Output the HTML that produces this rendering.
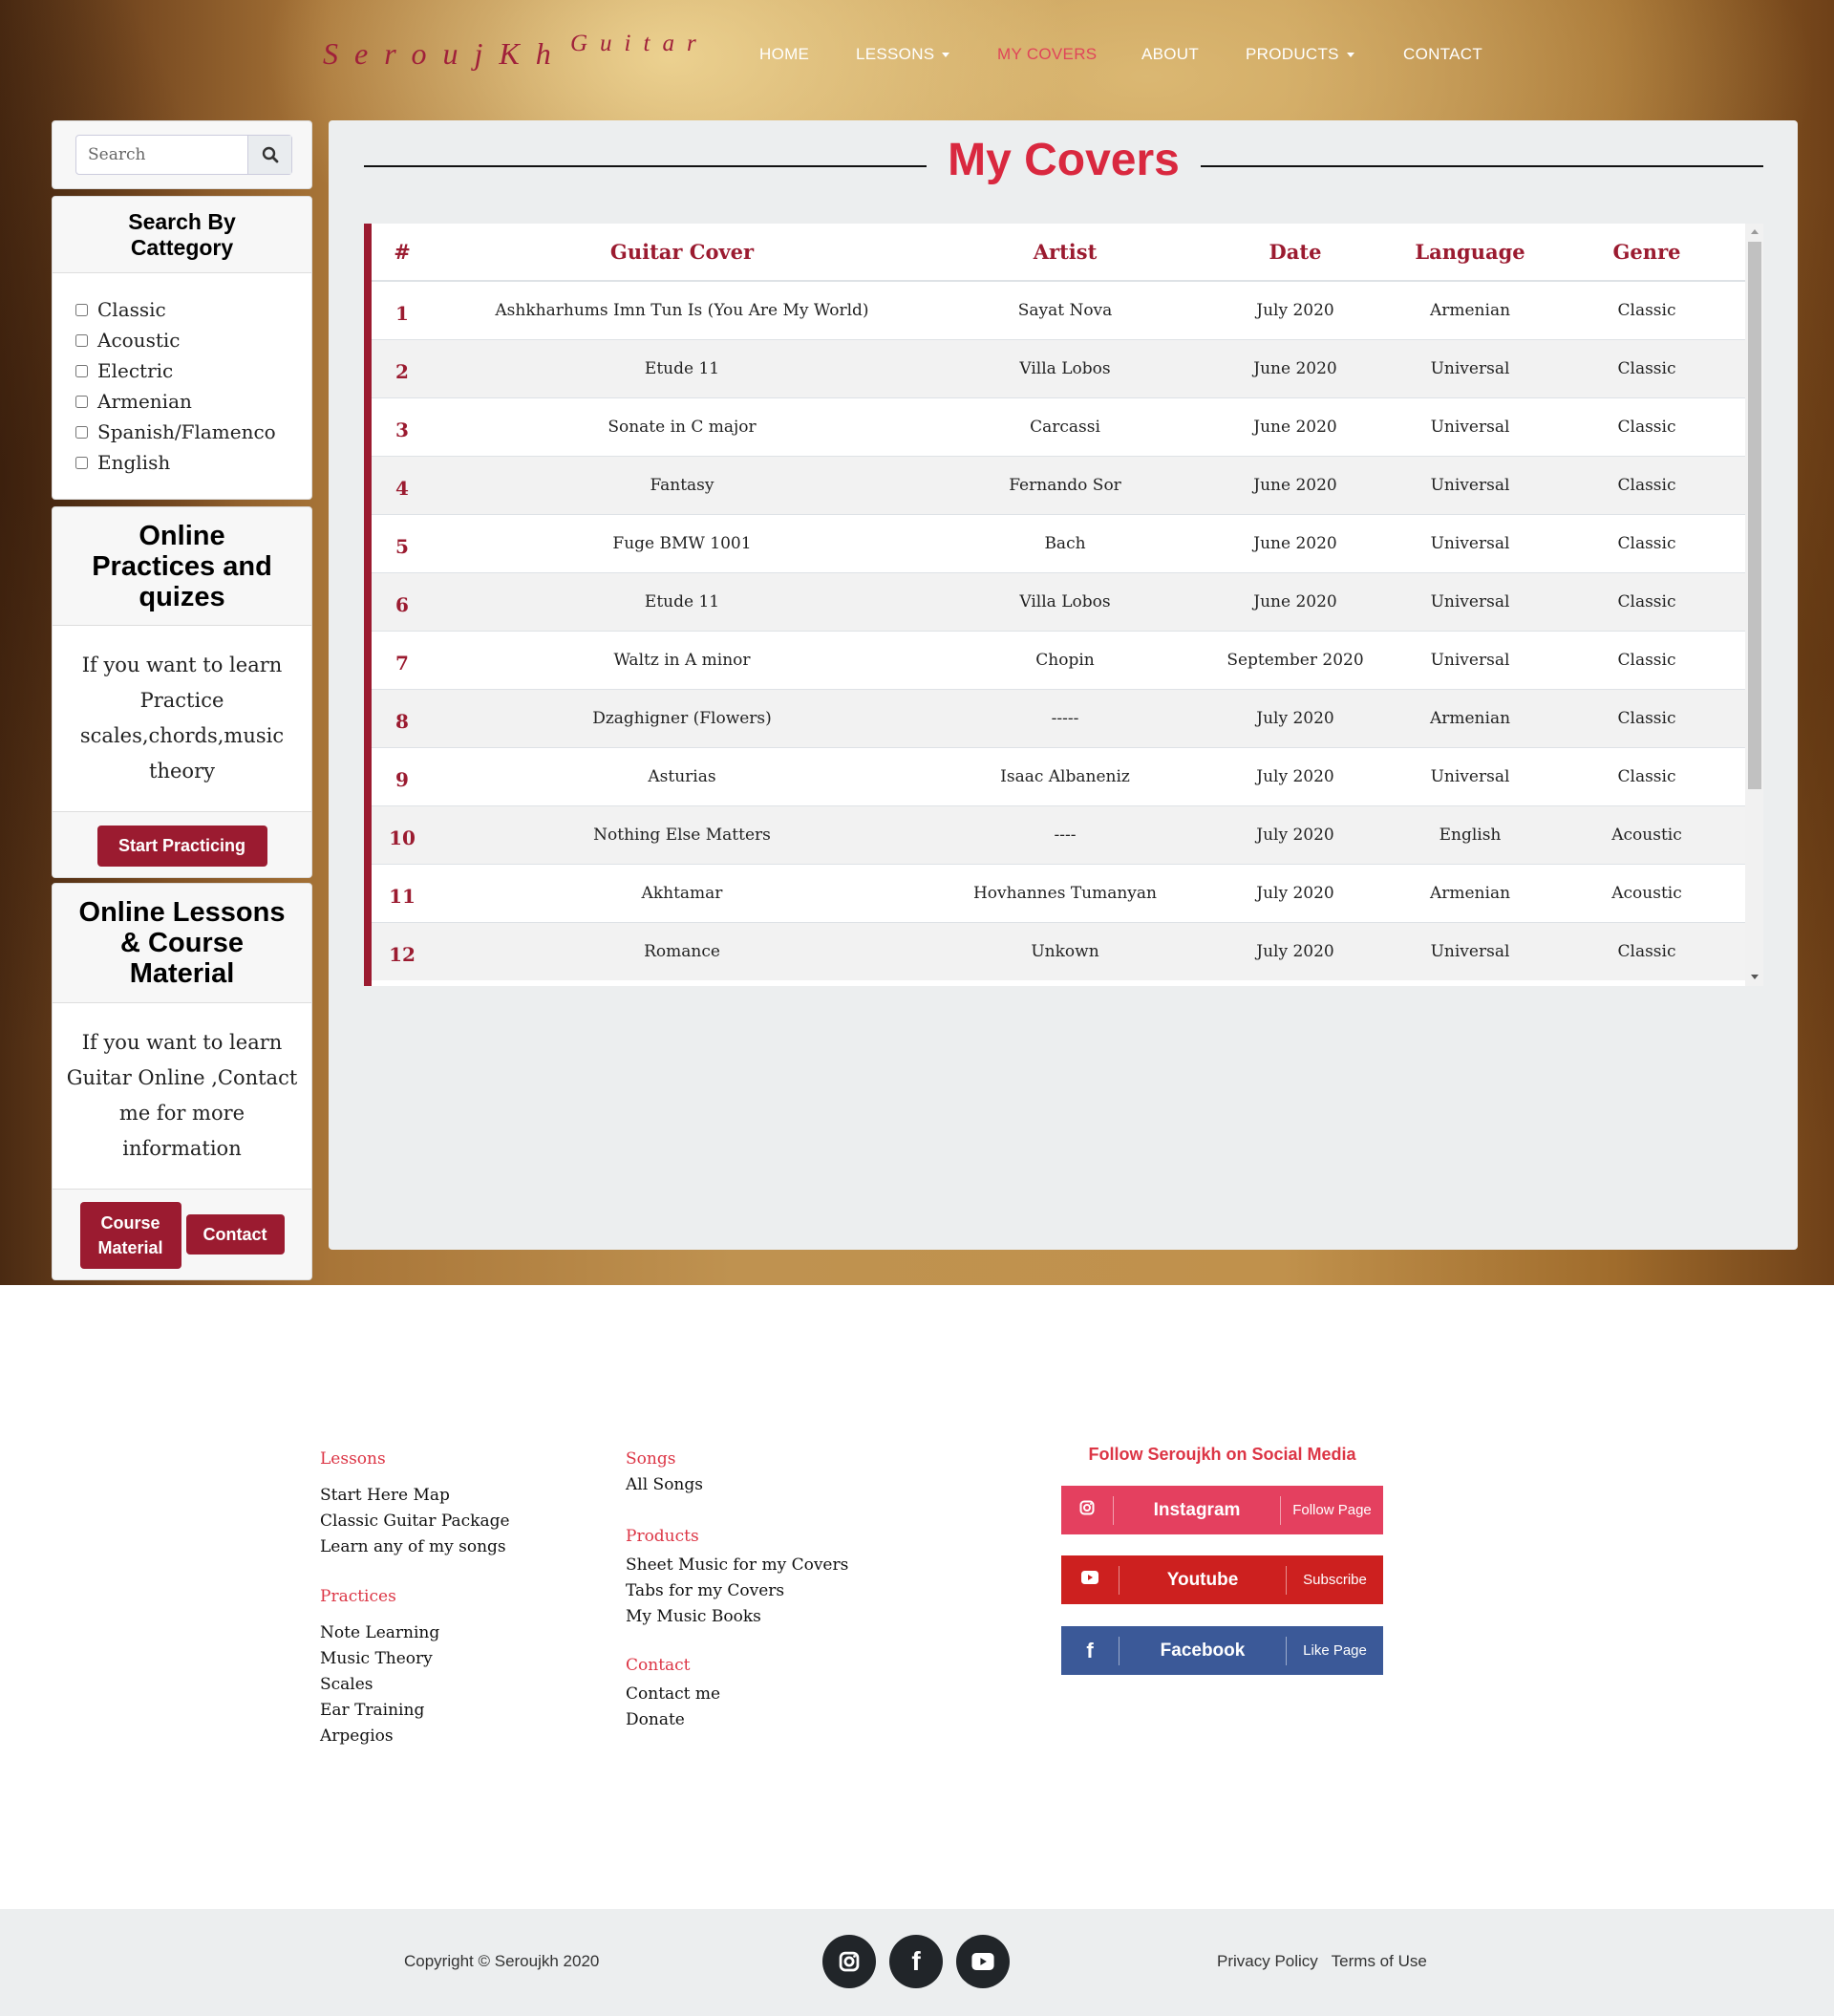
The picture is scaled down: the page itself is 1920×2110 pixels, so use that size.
<!DOCTYPE html>
<html><head><meta charset="utf-8">
<style>
*{box-sizing:border-box;margin:0;padding:0}
body{width:1920px;height:2110px;position:relative;background:#fff;font-family:"Liberation Sans",sans-serif;overflow:hidden}
.hero{position:absolute;left:0;top:0;width:1920px;height:1345px;
background:
radial-gradient(ellipse 420px 260px at 700px 60px,rgba(240,215,150,.9),rgba(240,215,150,0) 100%),
radial-gradient(ellipse 700px 300px at 1200px 80px,rgba(230,200,130,.7),rgba(230,200,130,0) 100%),
radial-gradient(ellipse 300px 500px at 1900px 700px,rgba(90,50,15,.6),rgba(0,0,0,0) 100%),
radial-gradient(ellipse 250px 600px at 0px 500px,rgba(50,25,10,.6),rgba(0,0,0,0) 100%),
linear-gradient(90deg,#4a2a12 0%,#7a4c22 8%,#a87538 18%,#bf9250 40%,#c0914c 70%,#a06c2c 88%,#6e4018 100%);}
.abs{position:absolute}
.logo1{left:338px;top:38px;font-family:"Liberation Serif",serif;font-style:italic;font-size:32px;color:#a0203a;letter-spacing:17px}
.logo2{left:597px;top:32px;font-family:"Liberation Serif",serif;font-style:italic;font-size:25px;color:#a0203a;letter-spacing:13px}
.nav{top:47px;font-size:17px;color:#fff;letter-spacing:.3px}
.caret{display:inline-block;width:0;height:0;border-left:4px solid transparent;border-right:4px solid transparent;border-top:5px solid #fff;vertical-align:middle;margin-left:8px}
.card{position:absolute;left:54px;width:273px;background:#f7f7f7;border-radius:4px;border:1px solid #ddd;overflow:hidden}
.ch{background:#f7f7f7;border-bottom:1px solid #ddd;text-align:center;font-weight:bold;color:#000;display:flex;align-items:center;justify-content:center}
.cb{background:#fff;text-align:center;font-family:"DejaVu Serif",serif;color:#222}
.cf{background:#f7f7f7;border-top:1px solid #ddd;display:flex;align-items:center;justify-content:center;gap:5px}
.btn{background:#9b1b30;color:#fff;font-weight:bold;font-size:18px;border-radius:4px;text-align:center;display:flex;align-items:center;justify-content:center;line-height:26px}
.main{left:344px;top:126px;width:1538px;height:1182px;background:#eceeef;border-radius:4px}
table{border-collapse:collapse;font-family:"DejaVu Serif",serif;table-layout:fixed}
td,th{text-align:center;vertical-align:middle;border-top:1px solid #dee2e6;height:61px;font-size:17px;color:#222}
th{color:#9b1b30;font-size:21px;font-weight:bold;height:60px;border-top:none;border-bottom:2px solid #dee2e6;background:#fff}
td.n{color:#9b1b30;font-weight:bold;font-size:20px;padding-top:6px}
tr:nth-child(odd) td{background:#f2f2f2}
tr:nth-child(even) td{background:#fff}
.fh{color:#dc3545;font-family:"DejaVu Serif",serif;font-size:17px}
.fi{color:#111;font-family:"DejaVu Serif",serif;font-size:17px}
.sb{position:absolute;left:1111px;width:337px;height:51px;color:#fff;display:flex;align-items:center}
.circ{position:absolute;top:2025px;width:56px;height:56px;border-radius:50%;background:#212529;display:flex;align-items:center;justify-content:center}
</style></head><body>
<div class="hero"></div>
<div class="abs logo1">SeroujKh</div>
<div class="abs logo2">Guitar</div>
<div class="abs nav" style="left:795px">HOME</div>
<div class="abs nav" style="left:896px">LESSONS<span class="caret"></span></div>
<div class="abs nav" style="left:1044px;color:#e0455a">MY COVERS</div>
<div class="abs nav" style="left:1195px">ABOUT</div>
<div class="abs nav" style="left:1304px">PRODUCTS<span class="caret"></span></div>
<div class="abs nav" style="left:1469px">CONTACT</div>

<!-- sidebar -->
<div class="card" style="top:126px;height:72px">
 <div style="position:absolute;left:24px;top:14px;width:227px;height:42px;border:1px solid #ccd;border-radius:4px;background:#fff;display:flex">
  <div style="flex:1;padding:10px 12px;font-family:'DejaVu Serif',serif;font-size:17px;color:#666">Search</div>
  <div style="width:46px;background:#e9ecef;border-left:1px solid #ccd;display:flex;align-items:center;justify-content:center">
   <svg width="18" height="18" viewBox="0 0 18 18"><circle cx="7.5" cy="7.5" r="5.5" fill="none" stroke="#333" stroke-width="2.4"/><path d="M11.5 11.5L16 16" stroke="#333" stroke-width="2.8" stroke-linecap="round"/></svg>
  </div>
 </div>
</div>
<div class="card" style="top:205px;height:318px;background:#fff">
 <div class="ch" style="height:80px;font-size:23px;line-height:27px">Search By<br>Cattegory</div>
 <div class="cb" style="text-align:left;padding:22px 0 0 24px;font-size:20px;line-height:32px">
  <div><input type="checkbox" style="width:13px;height:13px;margin-right:10px">Classic</div>
  <div><input type="checkbox" style="width:13px;height:13px;margin-right:10px">Acoustic</div>
  <div><input type="checkbox" style="width:13px;height:13px;margin-right:10px">Electric</div>
  <div><input type="checkbox" style="width:13px;height:13px;margin-right:10px">Armenian</div>
  <div><input type="checkbox" style="width:13px;height:13px;margin-right:10px">Spanish/Flamenco</div>
  <div><input type="checkbox" style="width:13px;height:13px;margin-right:10px">English</div>
 </div>
</div>
<div class="card" style="top:530px;height:389px">
 <div class="ch" style="height:124px;font-size:29px;line-height:32px">Online<br>Practices and<br>quizes</div>
 <div class="cb" style="height:194px;padding-top:23px;font-size:21px;line-height:37px">If you want to learn<br>Practice<br>scales,chords,music<br>theory</div>
 <div class="cf" style="height:71px"><div class="btn" style="width:178px;height:43px">Start Practicing</div></div>
</div>
<div class="card" style="top:924px;height:416px">
 <div class="ch" style="height:125px;font-size:29px;line-height:32px">Online Lessons<br>&amp; Course<br>Material</div>
 <div class="cb" style="height:194px;padding-top:23px;font-size:21px;line-height:37px">If you want to learn<br>Guitar Online ,Contact<br>me for more<br>information</div>
 <div class="cf" style="height:97px;align-items:flex-start;padding-top:13px"><div class="btn" style="width:106px;height:70px">Course<br>Material</div><div class="btn" style="width:103px;height:42px;margin-top:13px">Contact</div></div>
</div>

<!-- main -->
<div class="abs main"></div>
<div class="abs" style="left:381px;top:173px;width:589px;height:2px;background:#111"></div>
<div class="abs" style="left:1257px;top:173px;width:589px;height:2px;background:#111"></div>
<div class="abs" style="left:970px;top:140px;width:287px;text-align:center;font-size:48px;font-weight:bold;color:#d9283f">My Covers</div>
<div class="abs" style="left:381px;top:234px;width:1465px;height:798px;background:#fff;border-left:8px solid #9b1b30;overflow:hidden">
<table style="width:1438px">
<colgroup><col style="width:64px"><col style="width:522px"><col style="width:280px"><col style="width:202px"><col style="width:164px"><col style="width:206px"></colgroup>
<tr><th>#</th><th>Guitar Cover</th><th>Artist</th><th>Date</th><th>Language</th><th>Genre</th></tr>
<tr><td class="n">1</td><td>Ashkharhums Imn Tun Is (You Are My World)</td><td>Sayat Nova</td><td>July 2020</td><td>Armenian</td><td>Classic</td></tr>
<tr><td class="n">2</td><td>Etude 11</td><td>Villa Lobos</td><td>June 2020</td><td>Universal</td><td>Classic</td></tr>
<tr><td class="n">3</td><td>Sonate in C major</td><td>Carcassi</td><td>June 2020</td><td>Universal</td><td>Classic</td></tr>
<tr><td class="n">4</td><td>Fantasy</td><td>Fernando Sor</td><td>June 2020</td><td>Universal</td><td>Classic</td></tr>
<tr><td class="n">5</td><td>Fuge BMW 1001</td><td>Bach</td><td>June 2020</td><td>Universal</td><td>Classic</td></tr>
<tr><td class="n">6</td><td>Etude 11</td><td>Villa Lobos</td><td>June 2020</td><td>Universal</td><td>Classic</td></tr>
<tr><td class="n">7</td><td>Waltz in A minor</td><td>Chopin</td><td>September 2020</td><td>Universal</td><td>Classic</td></tr>
<tr><td class="n">8</td><td>Dzaghigner (Flowers)</td><td>-----</td><td>July 2020</td><td>Armenian</td><td>Classic</td></tr>
<tr><td class="n">9</td><td>Asturias</td><td>Isaac Albaneniz</td><td>July 2020</td><td>Universal</td><td>Classic</td></tr>
<tr><td class="n">10</td><td>Nothing Else Matters</td><td>----</td><td>July 2020</td><td>English</td><td>Acoustic</td></tr>
<tr><td class="n">11</td><td>Akhtamar</td><td>Hovhannes Tumanyan</td><td>July 2020</td><td>Armenian</td><td>Acoustic</td></tr>
<tr><td class="n">12</td><td>Romance</td><td>Unkown</td><td>July 2020</td><td>Universal</td><td>Classic</td></tr>
</table>
<div class="abs" style="left:1438px;top:0;width:19px;height:798px;background:#f1f1f1"></div>
<div class="abs" style="left:1441px;top:19px;width:14px;height:573px;background:#c1c1c1"></div>
<div class="abs" style="left:1444px;top:6px;width:0;height:0;border-left:4px solid transparent;border-right:4px solid transparent;border-bottom:5px solid #999"></div>
<div class="abs" style="left:1444px;top:786px;width:0;height:0;border-left:4px solid transparent;border-right:4px solid transparent;border-top:5px solid #555"></div>
</div>

<!-- footer -->
<div class="abs fh" style="left:335px;top:1517px">Lessons</div>
<div class="abs fi" style="left:335px;top:1552px;line-height:27px">Start Here Map<br>Classic Guitar Package<br>Learn any of my songs</div>
<div class="abs fh" style="left:335px;top:1661px">Practices</div>
<div class="abs fi" style="left:335px;top:1696px;line-height:27px">Note Learning<br>Music Theory<br>Scales<br>Ear Training<br>Arpegios</div>
<div class="abs fh" style="left:655px;top:1517px">Songs</div>
<div class="abs fi" style="left:655px;top:1544px">All Songs</div>
<div class="abs fh" style="left:655px;top:1598px">Products</div>
<div class="abs fi" style="left:655px;top:1625px;line-height:27px">Sheet Music for my Covers<br>Tabs for my Covers<br>My Music Books</div>
<div class="abs fh" style="left:655px;top:1733px">Contact</div>
<div class="abs fi" style="left:655px;top:1760px;line-height:27px">Contact me<br>Donate</div>

<div class="abs" style="left:1111px;top:1512px;width:337px;text-align:center;font-size:18px;font-weight:bold;color:#dc3545">Follow Seroujkh on Social Media</div>
<div class="sb" style="top:1555px;background:#e4405f">
 <div style="width:54px;text-align:center"><svg width="16" height="16" viewBox="0 0 16 16"><rect x="1.5" y="1.5" width="13" height="13" rx="3.5" fill="none" stroke="#fff" stroke-width="2"/><circle cx="8" cy="8" r="3" fill="none" stroke="#fff" stroke-width="2"/><circle cx="12" cy="4" r="1" fill="#fff"/></svg></div>
 <div style="width:1px;height:30px;background:rgba(255,255,255,.5)"></div>
 <div style="width:174px;text-align:center;font-size:19px;font-weight:bold">Instagram</div>
 <div style="width:1px;height:30px;background:rgba(255,255,255,.5)"></div>
 <div style="flex:1;text-align:center;font-size:15px">Follow Page</div>
</div>
<div class="sb" style="top:1628px;background:#cd201f">
 <div style="width:60px;text-align:center"><svg width="18" height="14" viewBox="0 0 18 14"><rect x="0" y="0" width="18" height="14" rx="3.5" fill="#fff"/><path d="M7 4L12 7L7 10Z" fill="#cd201f"/></svg></div>
 <div style="width:1px;height:30px;background:rgba(255,255,255,.5)"></div>
 <div style="width:174px;text-align:center;font-size:19px;font-weight:bold">Youtube</div>
 <div style="width:1px;height:30px;background:rgba(255,255,255,.5)"></div>
 <div style="flex:1;text-align:center;font-size:15px">Subscribe</div>
</div>
<div class="sb" style="top:1702px;background:#3b5998">
 <div style="width:60px;text-align:center;font-size:22px;font-weight:bold">f</div>
 <div style="width:1px;height:30px;background:rgba(255,255,255,.5)"></div>
 <div style="width:174px;text-align:center;font-size:19px;font-weight:bold">Facebook</div>
 <div style="width:1px;height:30px;background:rgba(255,255,255,.5)"></div>
 <div style="flex:1;text-align:center;font-size:15px">Like Page</div>
</div>

<div class="abs" style="left:0;top:1998px;width:1920px;height:112px;background:#eceeef"></div>
<div class="abs" style="left:423px;top:2043px;font-size:17px;color:#333">Copyright © Seroujkh 2020</div>
<div class="circ" style="left:861px"><svg width="22" height="22" viewBox="0 0 16 16"><rect x="1.5" y="1.5" width="13" height="13" rx="3.5" fill="none" stroke="#fff" stroke-width="2"/><circle cx="8" cy="8" r="3" fill="none" stroke="#fff" stroke-width="2"/><circle cx="12" cy="4" r="1" fill="#fff"/></svg></div>
<div class="circ" style="left:931px;color:#fff;font-weight:bold;font-size:28px">f</div>
<div class="circ" style="left:1001px"><svg width="24" height="18" viewBox="0 0 18 14"><rect x="0" y="0" width="18" height="14" rx="3.5" fill="#fff"/><path d="M7 4L12 7L7 10Z" fill="#212529"/></svg></div>
<div class="abs" style="left:1274px;top:2043px;font-size:17px;color:#333">Privacy Policy&nbsp;&nbsp; Terms of Use</div>
</body></html>
